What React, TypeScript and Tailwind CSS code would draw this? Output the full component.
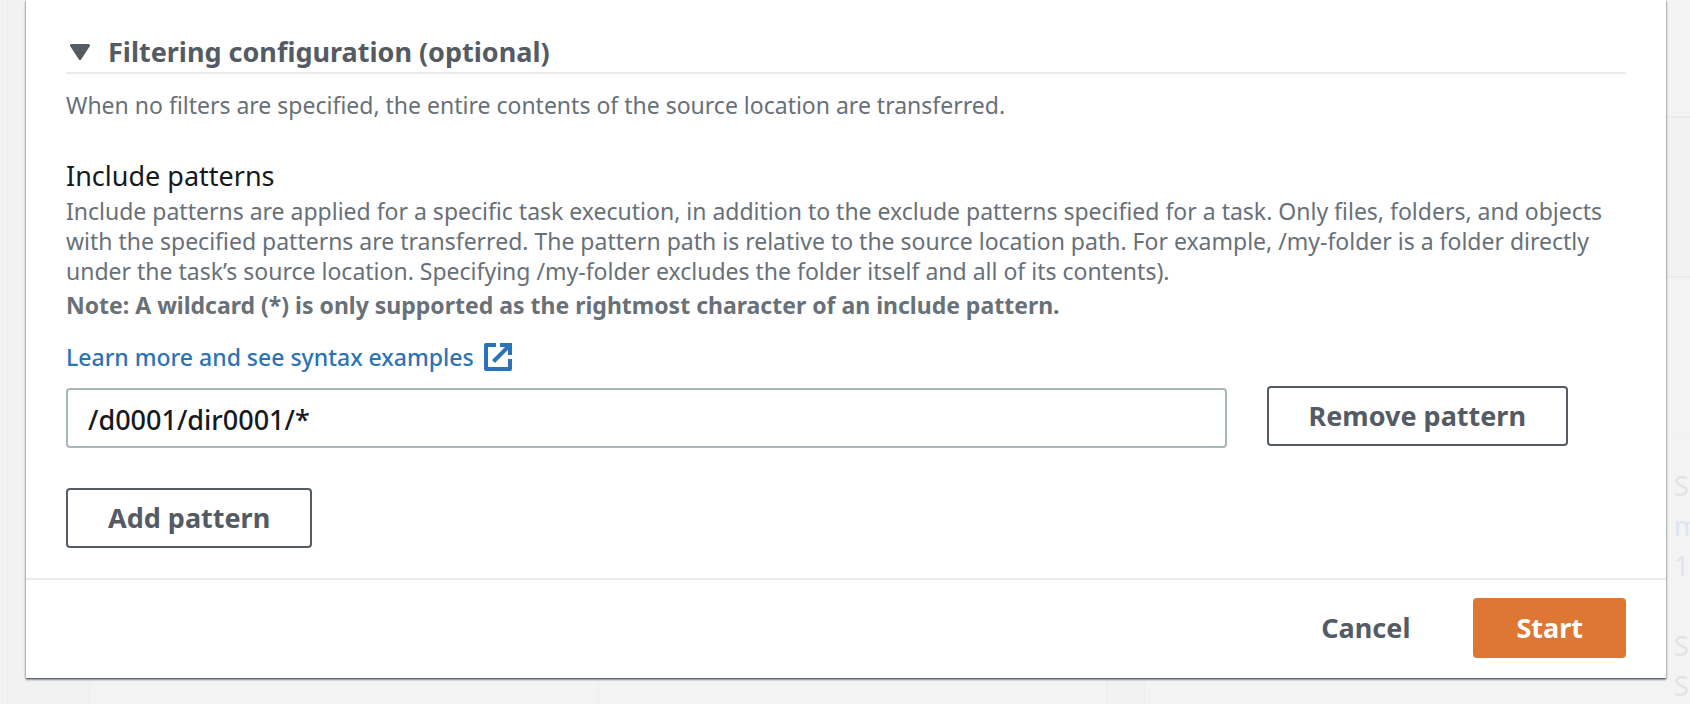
import { useState, type ReactNode } from "react";

function ExternalIcon() {
  return (
    <svg className="size-7 shrink-0" viewBox="0 0 28 28" fill="none" stroke="currentColor" strokeWidth="4" aria-hidden="true">
      <path d="M12 2H2v24h24V16" strokeLinejoin="round" />
      <path d="M16 2h10v10" />
      <path d="M25 3 9.5 18.5" />
    </svg>
  );
}

function OutlineButton({ children, onClick }: { children: ReactNode; onClick?: () => void }) {
  return (
    <button
      type="button"
      onClick={onClick}
      className="h-[60px] shrink-0 rounded-sm border-2 border-[#545b64] bg-white px-10 text-[27px] leading-9 font-bold text-[#545b64]"
    >
      {children}
    </button>
  );
}

function Backdrop() {
  return (
    <div className="absolute inset-0 flex overflow-hidden bg-[#f3f3f3] font-['Noto_Sans',sans-serif] text-[27px] leading-10 text-[#e3e3e3]" aria-hidden="true">
      <div className="w-2 border-r border-[#eeeeee]" />
      <div className="w-[82px] border-r border-[#eeeeee] bg-[#f2f2f2]" />
      <div className="flex-1 border-r border-[#eeeeee]" />
      <div className="flex-1 border-r border-[#eeeeee]" />
      <div className="w-[38px] border-r border-[#eeeeee] bg-[#f2f2f2]" />
      <div className="flex w-[545px] flex-col items-end">
        <div className="h-[118px] w-full shrink-0 border-b-2 border-[#ebebeb]" />
        <div className="h-40 w-full shrink-0 border-b-2 border-[#ebebeb] bg-[#f2f2f2]" />
        <div className="h-40 w-full shrink-0 border-b border-[#f0f0f0]" />
        <div className="w-4 pt-7">
          <p>S</p>
          <p className="text-[#dde6f0]">m</p>
          <p className="text-[#dde6f0]">1</p>
          <p className="mt-10">S</p>
          <p>S</p>
        </div>
      </div>
    </div>
  );
}

export default function App() {
  const [open, setOpen] = useState(true);
  const [patterns, setPatterns] = useState(["/d0001/dir0001/*"]);

  return (
    <div className="relative min-h-screen pr-6 pb-[26px] pl-[26px] font-['Noto_Sans',sans-serif]">
      <Backdrop />
      <section className="relative bg-white shadow-[0_1px_1px_rgba(0,28,36,0.3),0_2px_2px_rgba(0,28,36,0.3),1px_1px_2px_rgba(0,28,36,0.2),-1px_1px_2px_rgba(0,28,36,0.2)]">
        <div className="px-10 pt-[34px] pb-[30px]">
          <h3 className="border-b-2 border-[#ebebeb] pb-0.5 text-[27px] leading-9 font-bold text-[#545b64]">
            <button type="button" aria-expanded={open} onClick={() => setOpen(!open)} className="flex items-center gap-[18px] pl-1">
              <svg className="h-4 w-5" viewBox="0 0 20 16" aria-hidden="true">
                <path d="M1.5 1.5h17L10 14.5Z" fill="#545b64" stroke="#545b64" strokeWidth="3" strokeLinejoin="round" />
              </svg>
              Filtering configuration (optional)
            </button>
          </h3>
          {open && (
            <div className="pt-4 text-[23px] leading-[30px] text-[#687078]">
              <p>When no filters are specified, the entire contents of the source location are transferred.</p>
              <label htmlFor="pattern-0" className="mt-[38px] block text-[27px] leading-9 text-[#16191f]">
                Include patterns
              </label>
              <p className="mt-0.5">
                Include patterns are applied for a specific task execution, in addition to the exclude patterns specified for a task. Only files, folders, and objects with the specified patterns are transferred. The pattern path is relative to the source location path. For example, /my-folder is a folder directly under the task’s source location. Specifying /my-folder excludes the folder itself and all of its contents).
              </p>
              <p className="mt-1 font-bold">Note: A wildcard (*) is only supported as the rightmost character of an include pattern.</p>
              <a href="#syntax" className="mt-[22px] flex w-fit items-center gap-2.5 font-medium text-[#2b73b7]">
                Learn more and see syntax examples
                <ExternalIcon />
              </a>
              <div className="mt-3.5 flex flex-col gap-5">
                {patterns.map((value, i) => (
                  <div key={i} className="flex items-start gap-10 pr-[58px]">
                    <input
                      id={`pattern-${i}`}
                      type="text"
                      aria-label="Include patterns"
                      value={value}
                      onChange={(e) => setPatterns(patterns.map((p, j) => (j === i ? e.target.value : p)))}
                      className="mt-0.5 h-[60px] min-w-0 flex-1 rounded-sm border-2 border-[#aab7b8] bg-white px-5 pt-0.5 text-[27px] leading-9 font-medium text-[#16191f]"
                    />
                    <OutlineButton onClick={() => setPatterns(patterns.filter((_, j) => j !== i))}>Remove pattern</OutlineButton>
                  </div>
                ))}
              </div>
              <div className="mt-10 flex">
                <OutlineButton onClick={() => setPatterns([...patterns, ""])}>Add pattern</OutlineButton>
              </div>
            </div>
          )}
        </div>
        <footer className="flex justify-end gap-5 border-t-2 border-[#ebebeb] px-10 pt-[18px] pb-5 text-[27px] leading-9 font-bold">
          <button type="button" className="h-[60px] px-[43px] text-[#545b64]">Cancel</button>
          <button type="button" className="h-[60px] rounded-sm bg-[#de7733] px-[43px] text-white">Start</button>
        </footer>
      </section>
    </div>
  );
}
